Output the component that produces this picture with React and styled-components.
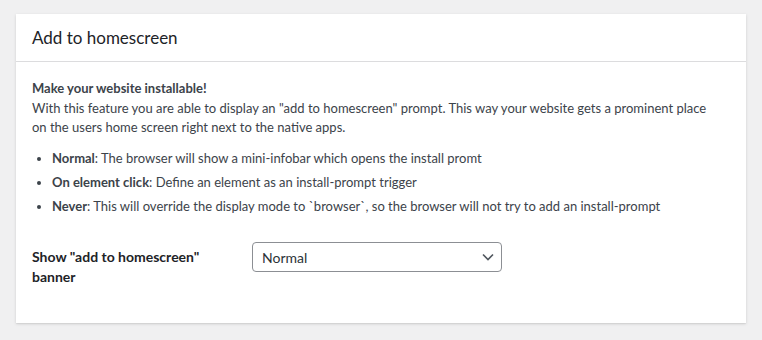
import React from "react";
import styled, { createGlobalStyle } from "styled-components";

const Global = createGlobalStyle`
  html, body { margin: 0; padding: 0; background: #f0f0f1; }
  body { font-family: "Segoe UI", Lato, sans-serif; color: #3c434a; font-size: 13px; }
  * { box-sizing: border-box; }
`;

const Page = styled.div`
  padding: 14px 16px 16px;
`;

const Card = styled.section`
  background: #fff;
  box-shadow: 0 1px 3px rgba(0,0,0,0.13), 0 1px 1px rgba(0,0,0,0.04);
`;

const Header = styled.header`
  height: 48px;
  display: flex;
  align-items: center;
  padding: 0 16px;
  border-bottom: 1px solid #dcdcde;
`;

const Title = styled.h2`
  margin: 0;
  font-size: 17px;
  font-weight: 400;
  color: #1d2327;
`;

const Body = styled.div`
  padding: 17px 16px 36px;
  line-height: 19.5px;
`;

const Intro = styled.p`
  margin: 0;
  max-width: 675px;
`;

const Strong = styled.strong`
  font-weight: 700;
`;

const List = styled.ul`
  margin: 11px 0 0;
  padding-left: 20px;
`;

const Item = styled.li`
  margin-bottom: 4.5px;
`;

const FormRow = styled.div`
  display: grid;
  grid-template-columns: 220px 250px;
  margin-top: 26px;
  align-items: start;
`;

const Label = styled.label`
  font-weight: 700;
  font-size: 14px;
  line-height: 20px;
  color: #1d2327;
  padding-top: 5px;
  padding-right: 20px;
`;

const SelectWrap = styled.div`
  position: relative;
  width: 250px;
`;

const Select = styled.select`
  appearance: none;
  width: 100%;
  height: 30px;
  border: 1px solid #8c8f94;
  border-radius: 4px;
  background: #fff;
  font-family: inherit;
  font-size: 14px;
  color: #2c3338;
  padding: 0 24px 0 9px;
`;

const Chevron = styled.svg`
  position: absolute;
  right: 7px;
  top: 9px;
  pointer-events: none;
`;

export default function App() {
  return (
    <>
      <Global />
      <Page>
        <Card>
          <Header>
            <Title>Add to homescreen</Title>
          </Header>
          <Body>
            <Intro>
              <Strong>Make your website installable!</Strong>
              <br />
              With this feature you are able to display an "add to homescreen" prompt. This way your website gets a prominent place on the users home screen right next to the native apps.
            </Intro>
            <List>
              <Item><Strong>Normal</Strong>: The browser will show a mini-infobar which opens the install promt</Item>
              <Item><Strong>On element click</Strong>: Define an element as an install-prompt trigger</Item>
              <Item><Strong>Never</Strong>: This will override the display mode to `browser`, so the browser will not try to add an install-prompt</Item>
            </List>
            <FormRow>
              <Label htmlFor="a2h">Show "add to homescreen" banner</Label>
              <SelectWrap>
                <Select id="a2h" defaultValue="normal">
                  <option value="normal">Normal</option>
                  <option value="click">On element click</option>
                  <option value="never">Never</option>
                </Select>
                <Chevron width="14" height="12" viewBox="0 0 14 12">
                  <path d="M2 3.5 L7 8.5 L12 3.5" fill="none" stroke="#50575e" strokeWidth="1.6" />
                </Chevron>
              </SelectWrap>
            </FormRow>
          </Body>
        </Card>
      </Page>
    </>
  );
}
